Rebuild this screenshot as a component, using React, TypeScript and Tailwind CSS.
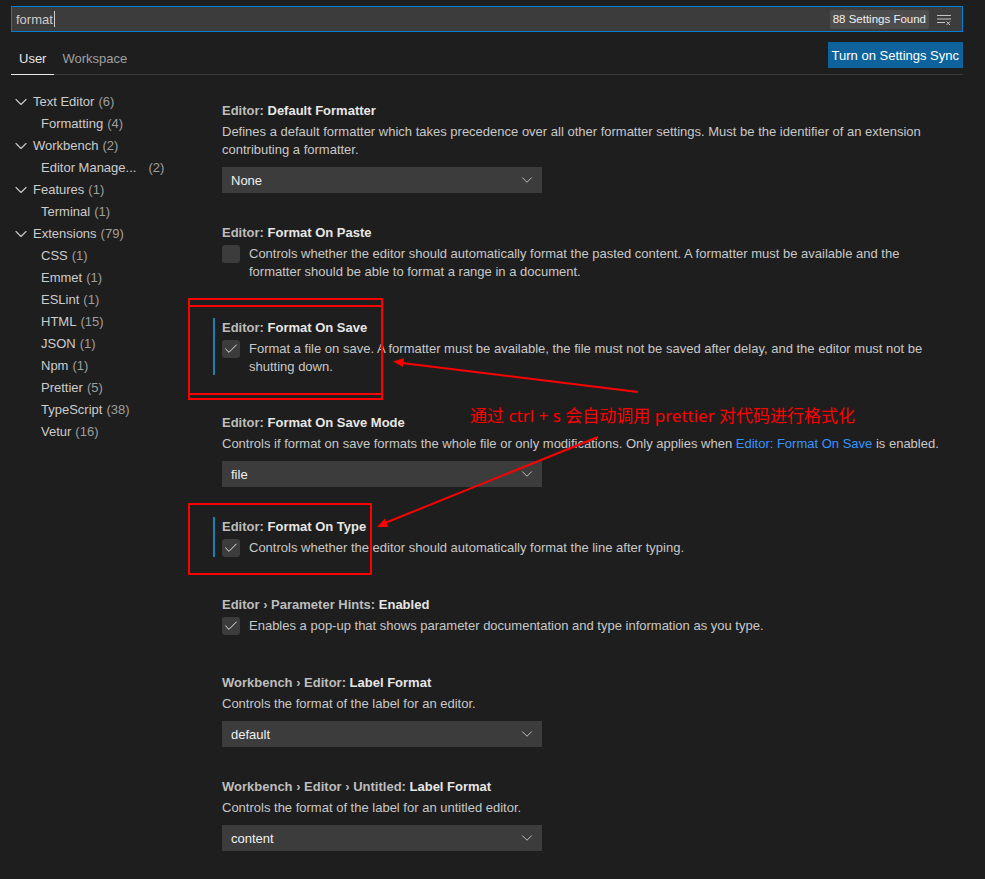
import { Check, ChevronDown } from "lucide-react";
import type { ReactNode } from "react";

type TreeRow = { label: string; count: number; top?: boolean; wide?: boolean };

const tree: TreeRow[] = [
  { label: "Text Editor", count: 6, top: true },
  { label: "Formatting", count: 4 },
  { label: "Workbench", count: 2, top: true },
  { label: "Editor Manage...", count: 2, wide: true },
  { label: "Features", count: 1, top: true },
  { label: "Terminal", count: 1 },
  { label: "Extensions", count: 79, top: true },
  { label: "CSS", count: 1 },
  { label: "Emmet", count: 1 },
  { label: "ESLint", count: 1 },
  { label: "HTML", count: 15 },
  { label: "JSON", count: 1 },
  { label: "Npm", count: 1 },
  { label: "Prettier", count: 5 },
  { label: "TypeScript", count: 38 },
  { label: "Vetur", count: 16 },
];

function ClearFilterIcon() {
  return (
    <svg width="16" height="16" viewBox="0 0 16 16" fill="none" stroke="#c5c5c5" strokeWidth="1">
      <path d="M1 4.5h14M1 8h14M1 11.5h8" />
      <path d="M10.5 10.5l3.5 3.5M14 10.5l-3.5 3.5" />
    </svg>
  );
}

function Title({ cat, name }: { cat: string; name: string }) {
  return (
    <div className="h-[18px] whitespace-nowrap text-[13px] leading-[20px]">
      <span className="font-semibold text-[#bdbdbd]">{cat}</span>
      <span className="font-bold text-[#e7e7e7]">{name}</span>
    </div>
  );
}

function Desc({ children }: { children: ReactNode }) {
  return (
    <div className="-mb-px mt-[3px] whitespace-nowrap pt-px text-[13px] leading-[18px] text-[#c8c8c8]">{children}</div>
  );
}

function Dropdown({ value }: { value: string }) {
  return (
    <div className="mt-[9px] flex h-[26px] w-[320px] items-center justify-between bg-[#3c3c3c] pl-[9px] pr-[6px] text-[13px] text-[#f0f0f0]">
      <span className="pt-px">{value}</span>
      <ChevronDown size={18} strokeWidth={1.25} className="text-[#c5c5c5]" />
    </div>
  );
}

function CheckRow({ checked, children }: { checked: boolean; children: ReactNode }) {
  return (
    <div className="mt-[3px] flex items-start">
      <div className="mt-px flex h-[18px] w-[18px] shrink-0 items-center justify-center rounded-[3px] bg-[#3c3c3c]">
        {checked && <Check size={16} strokeWidth={1.5} className="text-[#e7e7e7]" />}
      </div>
      <div className="-mb-px ml-[9px] whitespace-nowrap pt-px text-[13px] leading-[18px] text-[#c8c8c8]">{children}</div>
    </div>
  );
}

function Item({ focused, className, children }: { focused?: boolean; className?: string; children: ReactNode }) {
  return (
    <div
      className={`border-l-2 pl-[7px] ${focused ? "border-[#1b80b2]" : "border-transparent"} ${className ?? ""}`}
    >
      {children}
    </div>
  );
}

function Annotations() {
  return (
    <div className="pointer-events-none absolute inset-0">
      <svg width="985" height="879" className="absolute left-0 top-0" fill="none" stroke="#ff0000" strokeWidth="2">
        <rect x="189" y="299" width="193" height="100" />
        <rect x="189" y="306" width="193" height="88" />
        <rect x="189" y="504" width="182" height="70" />
        <line x1="638" y1="392" x2="402" y2="363" />
        <polygon points="393,361.5 404,358 403,367" fill="#ff0000" stroke="none" />
        <line x1="598" y1="437" x2="385" y2="523" />
        <polygon points="377,527 385,518.5 388.5,527" fill="#ff0000" stroke="none" />
      </svg>
      <span className="absolute left-[470px] top-[404px] whitespace-nowrap font-['Noto_Sans','Noto_Sans_CJK_SC',sans-serif] text-[17px] leading-[24px] text-[#ff0000]">
        通过 ctrl + s 会自动调用 prettier 对代码进行格式化
      </span>
    </div>
  );
}

export default function App() {
  return (
    <div className="relative h-[879px] w-[985px] overflow-hidden bg-[#1e1e1e] font-['Liberation_Sans',Arial,sans-serif] text-[13px] text-[#cccccc]">
      {/* search */}
      <div className="ml-[11px] mt-[6px] flex h-[26px] w-[952px] items-center border border-[#007fd4] bg-[#3c3c3c] pl-[4px] pr-[10px]">
        <span className="pt-px text-[13px] text-[#cccccc]">format</span>
        <span className="ml-px h-[16px] w-px bg-[#cccccc]" />
        <div className="ml-auto flex items-center gap-[7px]">
          <span className="rounded-[2px] bg-[#4d4d4d] px-[3px] py-px text-[11.5px] leading-[17px] text-[#f0f0f0]">
            88 Settings Found
          </span>
          <ClearFilterIcon />
        </div>
      </div>

      {/* tabs */}
      <div className="ml-[11px] mt-[10px] flex h-[33px] w-[952px] items-start justify-between border-b border-[#3c3c3c]">
        <div className="flex h-full items-stretch">
          <div className="-mb-px flex items-center border-b border-[#e7e7e7] px-[8px] pt-[2px] text-[#e7e7e7]">User</div>
          <div className="flex items-center px-[8px] pt-[2px] text-[#a0a0a0]">Workspace</div>
        </div>
        <button className="h-[26px] bg-[#0e639c] px-[4px] pt-px text-[13px] text-white">Turn on Settings Sync</button>
      </div>

      <div className="flex">
        {/* tree */}
        <div className="w-[213px] shrink-0 pl-[11px] pt-[16px]">
          {tree.map((r) => (
            <div key={r.label} className="flex h-[22px] items-center whitespace-nowrap">
              {r.top ? (
                <>
                  <ChevronDown size={20} strokeWidth={1.4} className="-mt-px text-[#c5c5c5]" />
                  <span className="ml-[2px] text-[#cccccc]">{r.label}</span>
                </>
              ) : (
                <span className="pl-[30px] text-[#cccccc]">{r.label}</span>
              )}
              <span className={`${r.wide ? "ml-[12px]" : "ml-[4px]"} text-[#9e9e9e]`}>({r.count})</span>
            </div>
          ))}
        </div>

        {/* settings */}
        <div className="flex-1 pt-[26px]">
          <Item>
            <Title cat="Editor: " name="Default Formatter" />
            <Desc>
              Defines a default formatter which takes precedence over all other formatter settings. Must be the identifier of an extension
              <br />
              contributing a formatter.
            </Desc>
            <Dropdown value="None" />
          </Item>

          <Item className="mt-[30px]">
            <Title cat="Editor: " name="Format On Paste" />
            <CheckRow checked={false}>
              Controls whether the editor should automatically format the pasted content. A formatter must be available and the
              <br />
              formatter should be able to format a range in a document.
            </CheckRow>
          </Item>

          <Item focused className="mt-[38px]">
            <Title cat="Editor: " name="Format On Save" />
            <CheckRow checked>
              Format a file on save. A formatter must be available, the file must not be saved after delay, and the editor must not be
              <br />
              shutting down.
            </CheckRow>
          </Item>

          <Item className="mt-[38px]">
            <Title cat="Editor: " name="Format On Save Mode" />
            <Desc>
              Controls if format on save formats the whole file or only modifications. Only applies when{" "}
              <span className="text-[#3794ff]">Editor: Format On Save</span> is enabled.
            </Desc>
            <Dropdown value="file" />
          </Item>

          <Item focused className="mt-[30px]">
            <Title cat="Editor: " name="Format On Type" />
            <CheckRow checked>Controls whether the editor should automatically format the line after typing.</CheckRow>
          </Item>

          <Item className="mt-[38px]">
            <Title cat="Editor › Parameter Hints: " name="Enabled" />
            <CheckRow checked>Enables a pop-up that shows parameter documentation and type information as you type.</CheckRow>
          </Item>

          <Item className="mt-[38px]">
            <Title cat="Workbench › Editor: " name="Label Format" />
            <Desc>Controls the format of the label for an editor.</Desc>
            <Dropdown value="default" />
          </Item>

          <Item className="mt-[30px]">
            <Title cat="Workbench › Editor › Untitled: " name="Label Format" />
            <Desc>Controls the format of the label for an untitled editor.</Desc>
            <Dropdown value="content" />
          </Item>
        </div>
      </div>

      <Annotations />
    </div>
  );
}
